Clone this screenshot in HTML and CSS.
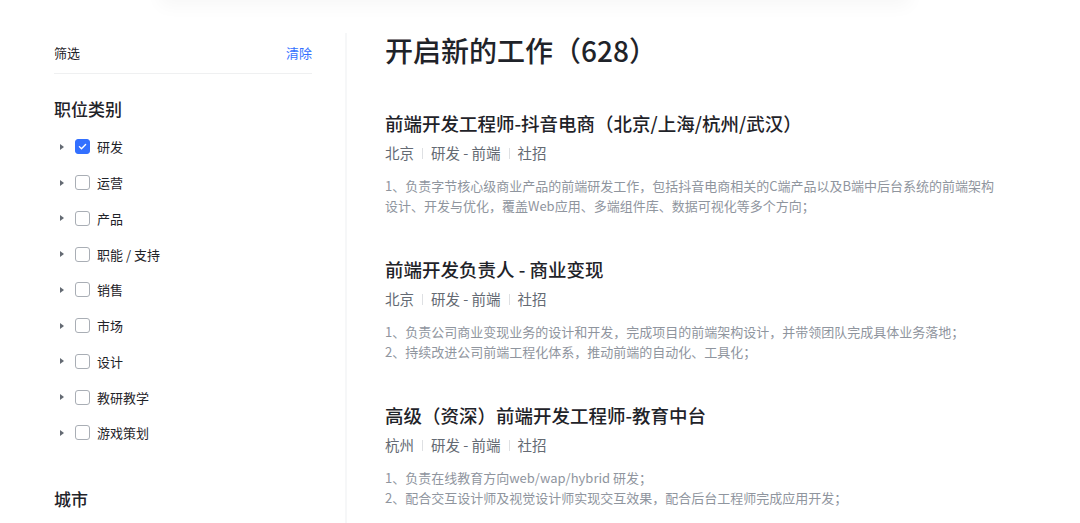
FILE: index.html
```html
<!DOCTYPE html>
<html lang="zh-CN">

<head>
    <meta charset="UTF-8">
    <meta name="viewport" content="width=device-width, initial-scale=1.0">
    <title>开启新的工作</title>
    <link rel="stylesheet" href="styles.css">
</head>

<body>
    <div class="topbar"></div>

    <div class="layout">
        <aside class="sidebar">
            <div class="filter-head">
                <span>筛选</span>
                <a href="#" class="clear">清除</a>
            </div>

            <h3 class="group-title">职位类别</h3>
            <ul class="options">
                <li><span class="arrow"></span><span class="box checked"><svg viewBox="0 0 16 16" width="11" height="11"><path d="M3.5 8.2l3 3 6-6.2" fill="none" stroke="#fff" stroke-width="2" stroke-linecap="round" stroke-linejoin="round"/></svg></span>研发</li>
                <li><span class="arrow"></span><span class="box"></span>运营</li>
                <li><span class="arrow"></span><span class="box"></span>产品</li>
                <li><span class="arrow"></span><span class="box"></span>职能 / 支持</li>
                <li><span class="arrow"></span><span class="box"></span>销售</li>
                <li><span class="arrow"></span><span class="box"></span>市场</li>
                <li><span class="arrow"></span><span class="box"></span>设计</li>
                <li><span class="arrow"></span><span class="box"></span>教研教学</li>
                <li><span class="arrow"></span><span class="box"></span>游戏策划</li>
            </ul>

            <h3 class="group-title city">城市</h3>
        </aside>

        <main class="main">
            <h1>开启新的工作（628）</h1>

            <div class="job">
                <h2>前端开发工程师-抖音电商（北京/上海/杭州/武汉）</h2>
                <div class="meta"><span>北京</span><i></i><span>研发 - 前端</span><i></i><span>社招</span></div>
                <p>1、负责字节核心级商业产品的前端研发工作，包括抖音电商相关的C端产品以及B端中后台系统的前端架构设计、开发与优化，覆盖Web应用、多端组件库、数据可视化等多个方向；</p>
            </div>

            <div class="job">
                <h2>前端开发负责人 - 商业变现</h2>
                <div class="meta"><span>北京</span><i></i><span>研发 - 前端</span><i></i><span>社招</span></div>
                <p>1、负责公司商业变现业务的设计和开发，完成项目的前端架构设计，并带领团队完成具体业务落地；<br>2、持续改进公司前端工程化体系，推动前端的自动化、工具化；</p>
            </div>

            <div class="job">
                <h2>高级（资深）前端开发工程师-教育中台</h2>
                <div class="meta"><span>杭州</span><i></i><span>研发 - 前端</span><i></i><span>社招</span></div>
                <p>1、负责在线教育方向web/wap/hybrid 研发；<br>2、配合交互设计师及视觉设计师实现交互效果，配合后台工程师完成应用开发；</p>
            </div>
        </main>
    </div>
</body>

</html>
```

FILE: styles.css
```css
body {
    margin: 0;
    font-family: "Noto Sans CJK SC", "Noto Sans", sans-serif;
    color: #1f2329;
    background: #fff;
    overflow: hidden;
}

.topbar {
    width: 750px;
    height: 40px;
    margin: -40px auto 0 160px;
    box-shadow: 0 6px 18px rgba(0, 0, 0, 0.035);
}

.layout {
    display: flex;
    padding-top: 32px;
}

/* sidebar */
.sidebar {
    width: 258px;
    margin-top: 1px;
    margin-left: 54px;
    padding-right: 33px;
    border-right: 2px solid #f6f7f8;
    min-height: 600px;
}

.filter-head {
    display: flex;
    justify-content: space-between;
    align-items: center;
    height: 38px;
    padding-bottom: 2px;
    border-bottom: 1px solid #eff0f1;
    font-size: 13px;
}

.clear {
    color: #3370ff;
    text-decoration: none;
}

.group-title {
    margin: 23px 0 8px;
    font-size: 17px;
    line-height: 24px;
    font-weight: 500;
}

.group-title.city {
    margin-top: 36px;
}

.options {
    list-style: none;
    margin: 0;
    padding: 0;
}

.options li {
    display: flex;
    align-items: center;
    height: 35.75px;
    font-size: 13px;
    color: #1f2329;
}

.arrow {
    width: 0;
    height: 0;
    margin-left: 6px;
    margin-right: 11px;
    border-top: 3.5px solid transparent;
    border-bottom: 3.5px solid transparent;
    border-left: 4px solid #646a73;
}

.box {
    display: flex;
    align-items: center;
    justify-content: center;
    box-sizing: border-box;
    width: 15px;
    height: 15px;
    margin-right: 7px;
    border: 1px solid #a9aeb5;
    border-radius: 3px;
}

.box.checked {
    background: #3370ff;
    border-color: #3370ff;
}

/* main */
.main {
    width: 618px;
    padding-left: 38px;
}

h1 {
    margin: 0 0 42px;
    font-size: 28px;
    line-height: 36px;
    font-weight: 500;
}

.job {
    margin-bottom: 40px;
}

.job h2 {
    margin: 0;
    font-size: 18.5px;
    line-height: 26px;
    font-weight: 500;
}

.meta {
    display: flex;
    align-items: center;
    margin-top: 7px;
    font-size: 14.5px;
    line-height: 20px;
    color: #646a73;
}

.meta i {
    width: 1px;
    height: 11px;
    margin: 0 8px;
    background: #dee0e3;
}

.job p {
    margin: 13px 0 0;
    font-size: 13px;
    line-height: 20px;
    color: #8f959e;
}
```
